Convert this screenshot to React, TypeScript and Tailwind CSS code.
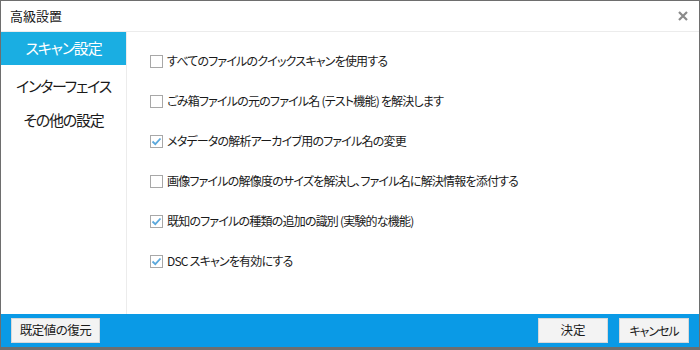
import { useState } from "react";

const options = [
  { label: "すべてのファイルのクイックスキャンを使用する", checked: false },
  { label: "ごみ箱ファイルの元のファイル名 (テスト機能) を解決します", checked: false },
  { label: "メタデータの解析アーカイブ用のファイル名の変更", checked: true },
  { label: "画像ファイルの解像度のサイズを解決し、ファイル名に解決情報を添付する", checked: false },
  { label: "既知のファイルの種類の追加の識別 (実験的な機能)", checked: true },
  { label: "DSC スキャンを有効にする", checked: true },
];

const tabs = ["スキャン設定", "インターフェイス", "その他の設定"];

function CheckBox({ checked }: { checked: boolean }) {
  return (
    <span className="w-[13px] h-[13px] border border-[#a8a8a8] bg-white flex items-center justify-center shrink-0">
      {checked && (
        <svg width="11" height="11" viewBox="0 0 11 11">
          <path d="M1.5 5.5 L4.3 8.2 L9.5 2.5" fill="none" stroke="#5aa8dc" strokeWidth="1.8" />
        </svg>
      )}
    </span>
  );
}

export default function App() {
  const [active] = useState(0);

  return (
    <div
      className="w-[700px] h-[350px] flex flex-col bg-white border border-b-0 border-[#6e6e6e] text-[#1a1a1a] [font-feature-settings:'palt']"
      style={{ fontFamily: '"Noto Sans CJK JP", "Noto Sans", sans-serif' }}
    >
      {/* Title bar */}
      <div className="h-[31px] flex items-center justify-between pl-[9px] pr-[11px] border-b border-[#ececec] shrink-0">
        <span className="text-[13px]">高級設置</span>
        <svg width="10" height="10" viewBox="0 0 10 10">
          <path d="M1 1 L9 9 M9 1 L1 9" stroke="#8a8a8a" strokeWidth="2.2" />
        </svg>
      </div>

      <div className="flex flex-1 min-h-0">
        {/* Sidebar */}
        <div className="w-[126px] border-r border-[#ececec] flex flex-col shrink-0">
          {tabs.map((t, i) => (
            <div
              key={t}
              className={`flex items-center justify-center text-[15px] tracking-[-1.2px] ${
                i === 0 ? "h-[33px]" : "h-[34px]"
              } ${i === 1 ? "mt-[4px]" : ""} ${
                i === active ? "bg-[#1aaee2] text-white" : "text-[#1a1a1a]"
              }`}
            >
              {t}
            </div>
          ))}
        </div>

        {/* Options */}
        <div className="flex-1 pl-[23px] pt-[20px] flex flex-col gap-[22px]">
          {options.map((o) => (
            <label key={o.label} className="flex items-center gap-[4px] h-[18px] text-[12px] tracking-[-0.8px]">
              <CheckBox checked={o.checked} />
              <span>{o.label}</span>
            </label>
          ))}
        </div>
      </div>

      {/* Footer */}
      <div className="h-[36px] bg-[#0a9ae6] flex items-center justify-between pl-[10px] pr-[10px] shrink-0 border-b-[3px] border-[#6e6e6e]">
        <button className="h-[25px] w-[89px] bg-[#f3f3f3] border border-[#d8d8d8] text-[12.5px] tracking-[-0.5px]">既定値の復元</button>
        <div className="flex gap-[11px]">
          <button className="h-[25px] w-[70px] bg-[#f3f3f3] border border-[#d8d8d8] text-[12.5px]">決定</button>
          <button className="h-[25px] w-[70px] bg-[#f3f3f3] border border-[#d8d8d8] text-[12px] tracking-[-1px]">キャンセル</button>
        </div>
      </div>
    </div>
  );
}
